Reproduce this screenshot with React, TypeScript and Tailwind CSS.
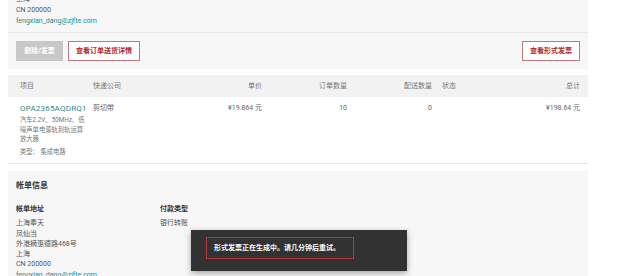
export default function App() {
  return (
    <div className="relative w-[640px] h-[276px] overflow-hidden bg-white font-['Roboto','Noto_Sans_CJK_SC',sans-serif] text-[7px] text-[#555]">
      {/* order address + actions */}
      <div className="ml-[8px] w-[580px] bg-[#f7f7f7]">
        <div className="-mt-[6px] px-[8px] pb-[5px] leading-[11px] border-b border-[#e6e6e6]">
          <div>上海</div>
          <div>CN 200000</div>
          <div className="text-[#2a8a8c]">fengxian_dang@zjfte.com</div>
        </div>
        <div className="flex items-center justify-between px-[8px] py-[8px]">
          <div className="flex gap-[5px]">
            <button className="h-[20px] w-[47px] bg-[#c8c8c8] text-white font-bold">删除/发票</button>
            <button className="h-[20px] w-[72px] bg-white border border-[#c0797a] text-[#b0262b] font-bold">查看订单送货详情</button>
          </div>
          <button className="h-[20px] w-[58px] bg-white border border-[#c0797a] text-[#b0262b] font-bold">查看形式发票</button>
        </div>
      </div>

      {/* line items table */}
      <div className="ml-[8px] mt-[6px] w-[580px]">
        <div className="grid grid-cols-[73px_107px_62px_85px_85px_68px_80px] h-[22px] items-center bg-[#f2f2f2] pl-[12px] pr-[8px] text-[#777]">
          <div>项目</div>
          <div>快递公司</div>
          <div className="text-right">单价</div>
          <div className="text-right">订单数量</div>
          <div className="text-right">配送数量</div>
          <div className="pl-[10px]">状态</div>
          <div className="text-right">总计</div>
        </div>
        <div className="grid grid-cols-[73px_107px_62px_85px_85px_68px_80px] h-[67px] pt-[6px] pl-[12px] pr-[8px] border-b border-[#e6e6e6] text-[#666]">
          <div>
            <div className="text-[#2a8a8c] text-[8px] leading-[11px] tracking-[0.2px]">OPA2365AQDRQ1</div>
            <div className="mt-[2px] text-[6.3px] leading-[9.5px] text-[#777]">
              <div>汽车2.2V、50MHz、低</div>
              <div>噪声单电源轨到轨运算</div>
              <div>放大器</div>
            </div>
            <div className="mt-[3px] text-[6.3px] leading-[9.5px] text-[#777]">类型： 集成电路</div>
          </div>
          <div className="leading-[11px]">剪切带</div>
          <div className="text-right leading-[11px]">¥19.864 元</div>
          <div className="text-right leading-[11px]">10</div>
          <div className="text-right leading-[11px]">0</div>
          <div></div>
          <div className="text-right leading-[11px]">¥198.64 元</div>
        </div>
      </div>

      {/* billing info */}
      <div className="ml-[8px] mt-[7px] w-[580px] h-[120px] bg-[#f7f7f7] px-[8px] pt-[10px]">
        <div className="text-[8px] font-bold text-[#333] leading-[10px]">帐单信息</div>
        <div className="mt-[13px] flex">
          <div className="w-[144px] leading-[10.3px]">
            <div className="font-bold text-[#333] mb-[4px]">帐单地址</div>
            <div>上海奉天</div>
            <div>凤仙当</div>
            <div>外港摘惠德路468号</div>
            <div>上海</div>
            <div>CN 200000</div>
            <div className="text-[#2a8a8c]">fengxian_dang@zjfte.com</div>
          </div>
          <div className="leading-[10.3px]">
            <div className="font-bold text-[#333] mb-[4px]">付款类型</div>
            <div>银行转账</div>
          </div>
        </div>
      </div>

      {/* toast */}
      <div className="absolute left-[191px] top-[230px] w-[216px] h-[41px] bg-[#323232] shadow-[0_2px_6px_rgba(0,0,0,0.35)] pl-[15px] pt-[7px]">
        <div className="w-[148px] h-[22px] border border-[#b8383c] flex items-center pl-[7px] text-white font-bold">
          形式发票正在生成中。请几分钟后重试。
        </div>
      </div>
    </div>
  );
}
